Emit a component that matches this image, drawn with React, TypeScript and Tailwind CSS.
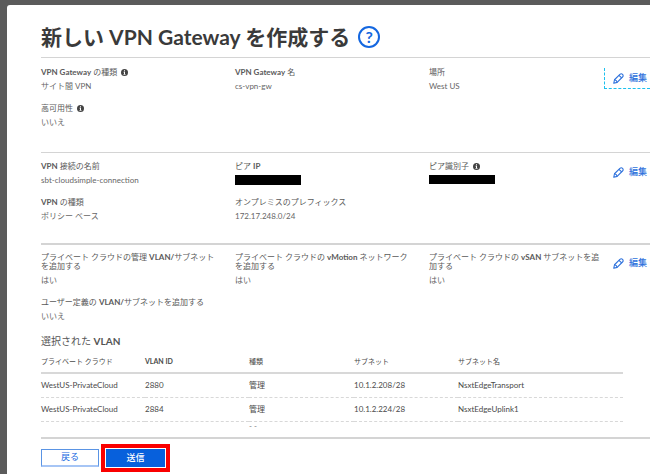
import type { ReactNode } from "react";

interface FieldProps {
  label: ReactNode;
  info?: boolean;
  children: ReactNode;
}

interface SectionProps {
  children: ReactNode;
  focused?: boolean;
  className: string;
}

const vlans = [
  { cloud: "WestUS-PrivateCloud", id: "2880", type: "管理", subnet: "10.1.2.208/28", name: "NsxtEdgeTransport" },
  { cloud: "WestUS-PrivateCloud", id: "2884", type: "管理", subnet: "10.1.2.224/28", name: "NsxtEdgeUplink1" },
];

function InfoIcon() {
  return (
    <svg viewBox="0 0 14 14" className="ml-1 inline-block h-[7px] w-[7px] shrink-0" aria-hidden="true">
      <circle cx="7" cy="7" r="7" fill="#444" />
      <path d="M6 2.5h2v2H6zM5 5.7h3v4.1h1v1.5H5V9.8h1V7.2H5z" fill="white" />
    </svg>
  );
}

function PencilIcon() {
  return (
    <svg viewBox="0 0 22 22" className="h-[11px] w-[11px] shrink-0" fill="none" stroke="#2f72dc" strokeWidth="2.2" strokeLinejoin="round" aria-hidden="true">
      <path d="M1.5 20.5l1.5-7L13.8 2.8c1.800-1.700 3.700-1.700 5.300-.1s1.600 3.600-.1 5.300L8.300 18.700z" />
      <path d="M12 4.600l5.300 5.300M3 13.500c2.600.3 4.900 2.500 5.300 5.200" />
    </svg>
  );
}

function Field({ label, info, children }: FieldProps) {
  return (
    <div>
      <dt className="text-[8px] leading-[9px] text-[#5a5a5a]">
        {label}
        {info && <InfoIcon />}
      </dt>
      <dd className="mt-1 text-[8px] leading-[11px] text-[#666]">{children}</dd>
    </div>
  );
}

function Section({ children, focused, className }: SectionProps) {
  return (
    <section className={`flex items-start border-[#d4d4d4] ${className}`}>
      <dl className="grid flex-1 grid-cols-3 gap-x-[11px] gap-y-3">{children}</dl>
      <button
        type="button"
        className={
          focused
            ? "-ml-2 flex h-[21px] w-[46px] shrink-0 items-center gap-[5px] border-b border-l border-dashed border-[#1cc0ee] pl-2 text-[9px] font-medium text-[#2f72dc]"
            : "-ml-2 flex h-5 w-[46px] shrink-0 items-center gap-[5px] border-l border-transparent pl-2 text-[9px] font-medium text-[#2f72dc]"
        }
      >
        <PencilIcon />
        <span className="whitespace-nowrap">編集</span>
      </button>
    </section>
  );
}

export default function App() {
  return (
    <div className="min-h-screen overflow-hidden bg-[#5b5b5b] pt-[5px] pl-[7px] font-['Lato','Noto_Sans_CJK_JP',sans-serif]">
      <main className="min-h-screen rounded-tl-[3px] bg-white pl-[34px]">
        <header className="flex h-[52px] items-center gap-2 pt-3">
          <h1 className="text-[21px] leading-7 font-bold text-[#3a3a3a]">
            新しい VPN Gateway を作成する
          </h1>
          <button
            type="button"
            aria-label="ヘルプ"
            className="flex h-[22px] w-[22px] items-center justify-center rounded-full border-2 border-[#1467e0] text-base leading-none font-bold text-[#1467e0]"
          >
            ?
          </button>
        </header>

        <Section focused className="h-[95px] border-t pt-[10px]">
          <Field label={<><b>VPN Gateway</b> の種類</>} info>サイト間 VPN</Field>
          <Field label={<><b>VPN Gateway</b> 名</>}>cs-vpn-gw</Field>
          <Field label="場所">West US</Field>
          <Field label="高可用性" info>いいえ</Field>
        </Section>

        <Section className="h-[91px] border-t pt-[9px]">
          <Field label={<><b>VPN</b> 接続の名前</>}>sbt-cloudsimple-connection</Field>
          <Field label={<>ピア <b>IP</b></>}>
            <span className="block h-[10px] w-[66px] bg-black" />
          </Field>
          <Field label="ピア識別子" info>
            <span className="block h-[9px] w-[66px] bg-black" />
          </Field>
          <Field label={<><b>VPN</b> の種類</>}>ポリシー ベース</Field>
          <Field label="オンプレミスのプレフィックス">172.17.248.0/24</Field>
        </Section>

        <Section className="h-[91px] border-t-2 pt-2">
          <Field label={<>プライベート クラウドの管理 <b>VLAN/</b>サブネット<br />を追加する</>}>はい</Field>
          <Field label={<>プライベート クラウドの <b>vMotion</b> ネットワーク<br />を追加する</>}>はい</Field>
          <Field label={<>プライベート クラウドの <b>vSAN</b> サブネットを追<br />加する</>}>はい</Field>
          <div className="col-span-3">
            <Field label={<>ユーザー定義の <b>VLAN/</b>サブネットを追加する</>}>いいえ</Field>
          </div>
        </Section>

        <h2 className="text-[10px] leading-[14px] text-[#555]">
          選択された <span className="font-bold">VLAN</span>
        </h2>
        <div className="mt-[7px] mr-[27px] min-h-[74px]">
          <table className="w-full table-fixed text-left text-[8px] leading-3 text-[#4a4a4a]">
            <thead className="text-[7px]">
              <tr className="h-[18px] border-b-2 border-[#d8d8d8] align-top">
                <th className="w-[104px] font-normal">プライベート クラウド</th>
                <th className="w-[104px] font-bold">VLAN ID</th>
                <th className="w-[105px] font-normal">種類</th>
                <th className="w-[104px] font-normal">サブネット</th>
                <th className="font-normal">サブネット名</th>
              </tr>
            </thead>
            <tbody>
              {vlans.map((vlan) => (
                <tr key={vlan.id} className="h-6 border-b border-dashed border-[#d8d8d8]">
                  <td>{vlan.cloud}</td>
                  <td>{vlan.id}</td>
                  <td>{vlan.type}</td>
                  <td>{vlan.subnet}</td>
                  <td>{vlan.name}</td>
                </tr>
              ))}
              <tr className="leading-[8px] text-[#777]">
                <td />
                <td />
                <td>- -</td>
                <td />
                <td />
              </tr>
            </tbody>
          </table>
        </div>

        <footer className="mt-[7px] flex items-start border-t-2 border-[#d4d4d4] pt-[5px] text-[9px]">
          <button type="button" className="mt-[5px] h-[18px] w-[58px] border border-b-2 border-[#5a94e4] border-b-[#a6c5f5] text-[#1467e0]">
            戻る
          </button>
          <div className="ml-[2px] border-4 border-[#fa0000] p-[1px]">
            <button type="button" className="block h-[18px] w-[59px] bg-[#0760dc] font-medium text-white">
              送信
            </button>
          </div>
        </footer>
      </main>
    </div>
  );
}
